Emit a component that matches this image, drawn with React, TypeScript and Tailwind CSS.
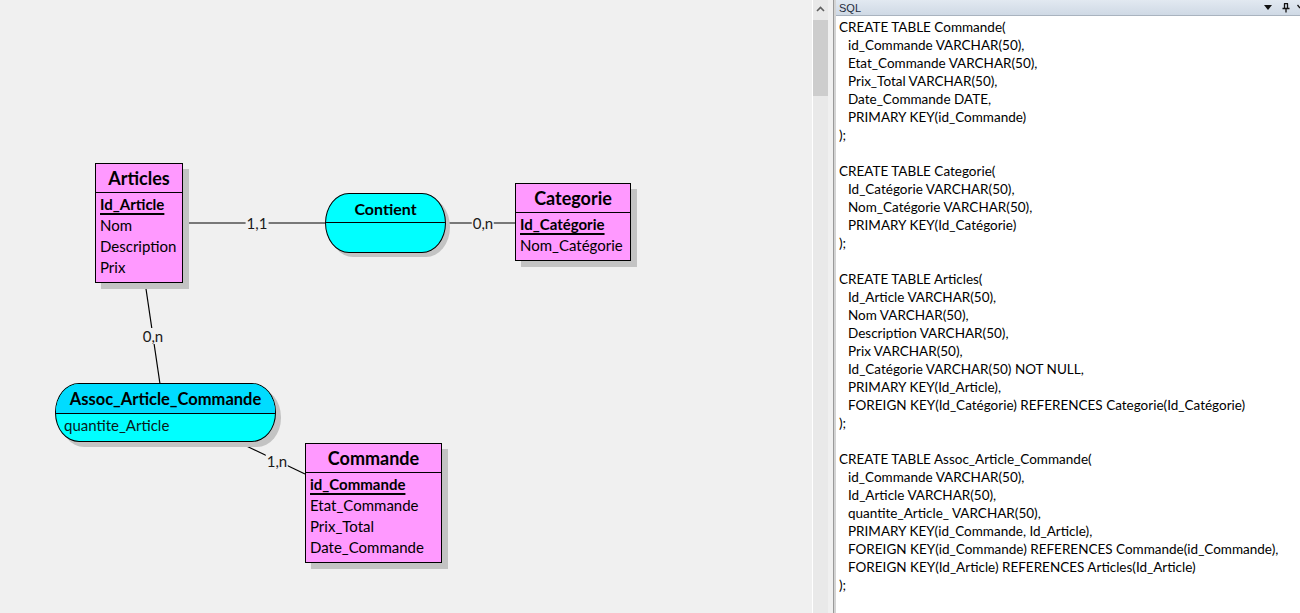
import React from "react";

type Line = { text: string; indent?: boolean };

const sql: Line[] = [
  { text: "CREATE TABLE Commande(" },
  { text: "id_Commande VARCHAR(50),", indent: true },
  { text: "Etat_Commande VARCHAR(50),", indent: true },
  { text: "Prix_Total VARCHAR(50),", indent: true },
  { text: "Date_Commande DATE,", indent: true },
  { text: "PRIMARY KEY(id_Commande)", indent: true },
  { text: ");" },
  { text: "" },
  { text: "CREATE TABLE Categorie(" },
  { text: "Id_Catégorie VARCHAR(50),", indent: true },
  { text: "Nom_Catégorie VARCHAR(50),", indent: true },
  { text: "PRIMARY KEY(Id_Catégorie)", indent: true },
  { text: ");" },
  { text: "" },
  { text: "CREATE TABLE Articles(" },
  { text: "Id_Article VARCHAR(50),", indent: true },
  { text: "Nom VARCHAR(50),", indent: true },
  { text: "Description VARCHAR(50),", indent: true },
  { text: "Prix VARCHAR(50),", indent: true },
  { text: "Id_Catégorie VARCHAR(50) NOT NULL,", indent: true },
  { text: "PRIMARY KEY(Id_Article),", indent: true },
  { text: "FOREIGN KEY(Id_Catégorie) REFERENCES Categorie(Id_Catégorie)", indent: true },
  { text: ");" },
  { text: "" },
  { text: "CREATE TABLE Assoc_Article_Commande(" },
  { text: "id_Commande VARCHAR(50),", indent: true },
  { text: "Id_Article VARCHAR(50),", indent: true },
  { text: "quantite_Article_ VARCHAR(50),", indent: true },
  { text: "PRIMARY KEY(id_Commande, Id_Article),", indent: true },
  { text: "FOREIGN KEY(id_Commande) REFERENCES Commande(id_Commande),", indent: true },
  { text: "FOREIGN KEY(Id_Article) REFERENCES Articles(Id_Article)", indent: true },
  { text: ");" },
];

function Entity({
  title,
  idField,
  fields,
  className,
}: {
  title: string;
  idField: string;
  fields: string[];
  className: string;
}) {
  return (
    <div
      className={
        "absolute border border-black bg-[#ff99ff] shadow-[6px_6px_0_#c3c3c3] " +
        className
      }
    >
      <div className="h-[29px] border-b border-black text-center text-[18px] font-bold leading-[29px] text-black">
        {title}
      </div>
      <div className="pl-[4px] pt-[1px] text-[15px] text-black">
        <div className="h-[21px] leading-[21px] font-bold underline decoration-[1.5px] underline-offset-[3px]">
          {idField}
        </div>
        {fields.map((f) => (
          <div key={f} className="h-[21px] leading-[21px]">
            {f}
          </div>
        ))}
      </div>
    </div>
  );
}

function Label({ text, className }: { text: string; className: string }) {
  return (
    <div
      className={
        "absolute -translate-x-1/2 -translate-y-1/2 bg-[#f0f0f0] px-[1px] text-[15px] leading-[16px] text-[#1a1a1a] " +
        className
      }
    >
      {text}
    </div>
  );
}

export default function App() {
  return (
    <div className="flex h-[613px] w-[1300px] overflow-hidden bg-[#f0f0f0] font-['Lato','Liberation_Sans',sans-serif]">
      {/* canvas MCD */}
      <div className="relative h-full w-[812px] shrink-0 bg-[#f0f0f0]">
        <svg className="absolute inset-0" width="812" height="613">
          <g stroke="#000" strokeWidth="1.2">
            <line x1="182" y1="223" x2="325" y2="223" />
            <line x1="445" y1="223" x2="515" y2="223" />
            <line x1="145" y1="282" x2="160" y2="384" />
            <line x1="236" y1="441" x2="305" y2="474" />
          </g>
        </svg>

        <Label text="1,1" className="left-[257px] top-[223px]" />
        <Label text="0,n" className="left-[483px] top-[223px]" />
        <Label text="0,n" className="left-[153px] top-[336px]" />
        <Label text="1,n" className="left-[277px] top-[461px]" />

        <Entity
          title="Articles"
          idField="Id_Article"
          fields={["Nom", "Description", "Prix"]}
          className="left-[95px] top-[163px] h-[120px] w-[88px]"
        />
        <Entity
          title="Categorie"
          idField="Id_Catégorie"
          fields={["Nom_Catégorie"]}
          className="left-[515px] top-[183px] h-[78px] w-[116px]"
        />
        <Entity
          title="Commande"
          idField="id_Commande"
          fields={["Etat_Commande", "Prix_Total", "Date_Commande"]}
          className="left-[305px] top-[443px] h-[120px] w-[137px]"
        />

        {/* associations */}
        <div className="absolute left-[325px] top-[193px] h-[60px] w-[121px] overflow-hidden rounded-[24px/30px] border border-black bg-[#00ffff] shadow-[4px_4px_0_#c3c3c3]">
          <div className="h-[29px] border-b border-black text-center text-[16px] font-bold leading-[29px] text-black">
            Contient
          </div>
        </div>
        <div className="absolute left-[55px] top-[383px] h-[59px] w-[221px] overflow-hidden rounded-[24px/29px] border border-black bg-[#00ffff] shadow-[5px_5px_0_#c3c3c3]">
          <div className="h-[30px] border-b border-black bg-[#00dcff] text-center text-[16.5px] font-bold leading-[30px] text-black">
            Assoc_Article_Commande
          </div>
          <div className="pl-[8px] text-[15px] leading-[22px] text-[#0a1a1a]">quantite_Article</div>
        </div>
      </div>

      {/* scrollbar */}
      <div className="h-full w-px shrink-0 bg-white" />
      <div className="flex h-full w-[15px] shrink-0 flex-col bg-[#e9e9e9]">
        <div className="flex h-[17px] items-center justify-center">
          <svg width="9" height="6" viewBox="0 0 9 6">
            <path d="M1 5 L4.5 1.5 L8 5" fill="none" stroke="#606060" strokeWidth="1.6" />
          </svg>
        </div>
        <div className="mt-[3px] h-[76px] w-full bg-[#cdcdcd]" />
      </div>
      <div className="h-full w-[5px] shrink-0 bg-[#f0f0f0]" />
      <div className="h-full w-px shrink-0 bg-[#9a9a9a]" />
      <div className="h-full w-[2px] shrink-0 bg-[#d4d4d4]" />

      {/* panneau SQL */}
      <div className="flex h-full flex-1 flex-col bg-white">
        <div className="flex h-[16px] shrink-0 items-center border-b border-[#a9b3bf] bg-gradient-to-b from-[#e2e9f1] to-[#cfd9e5] pl-[3px] pr-0">
          <span className="font-['Liberation_Sans',sans-serif] text-[11px] leading-[14px] text-[#1e2b3b]">SQL</span>
          <div className="ml-auto flex items-center">
            <svg width="10" height="8" viewBox="0 0 10 8" className="mr-[9px]">
              <path d="M1 1 H9 L5 6 Z" fill="#111" />
            </svg>
            <svg width="8" height="10" viewBox="0 0 8 10" className="mr-[7px]">
              <path d="M2 0.5 H6 M2.5 0.5 V5 M5.5 0.5 V5 M0.5 5.5 H7.5 M4 5.5 V9.5" fill="none" stroke="#111" strokeWidth="1.3" />
            </svg>
            <svg width="3" height="10" viewBox="0 0 3 10">
              <path d="M0.5 2 L3 5" fill="none" stroke="#111" strokeWidth="1.3" />
            </svg>
          </div>
        </div>
        <div className="pl-[3px] pt-[2px] text-[13.5px] leading-[18px] text-black">
          {sql.map((l, i) => (
            <div key={i} className={"h-[18px] whitespace-pre " + (l.indent ? "pl-[9px]" : "")}>
              {l.text}
            </div>
          ))}
        </div>
      </div>
    </div>
  );
}
